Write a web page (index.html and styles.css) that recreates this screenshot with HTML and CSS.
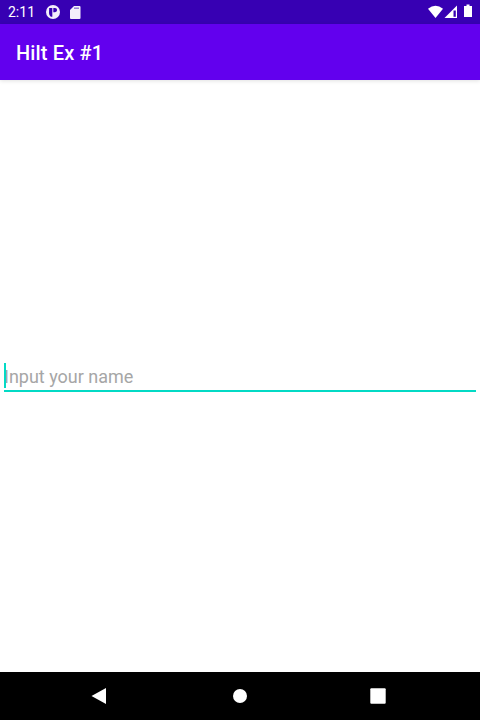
FILE: index.html
```html
<!DOCTYPE html>
<html lang="en">
<head>
<meta charset="utf-8">
<title>Hilt Ex #1</title>
<link rel="stylesheet" href="styles.css">
</head>
<body>
<div class="screen">
  <header class="status">
    <span class="clock">2:11</span>
    <svg class="icon app" width="14" height="14" viewBox="0 0 14 14"><circle cx="7" cy="7" r="7" fill="#f3effb"/><path d="M3.200 3H6.300V11.800H4.800Q3 10.300 3 8z" fill="#3700b3"/><path d="M7.300 3H9a2.100 2.100 0 0 1 0 4.200H7.300z" fill="#3700b3"/></svg>
    <svg class="icon sd" width="11" height="13" viewBox="0 0 11 13"><path d="M4 0H9.500Q10.500 0 10.500 1V12Q10.500 13 9.500 13H1Q0 13 0 12V4z" fill="#f3effb"/><path d="M4 2.200h5" stroke="#8f70d4" stroke-width="1.400"/></svg>
    <span class="spacer"></span>
    <svg class="icon" width="45" height="16" viewBox="0 0 45 16"><path d="M0 4.800Q7.500-1.200 15 4.800L7.500 14z" fill="#fff"/><path d="M29 1.500V14H16.500z" fill="#fff"/><path d="M25.500 6.500h2.300V12.800h-2.300z" fill="#3700b3"/><path d="M36 2h2.500V.5h3V2H44v11h-8z" fill="#fff"/></svg>
  </header>
  <div class="toolbar"><h1>Hilt Ex #1</h1></div>
  <main class="content">
    <div class="field"><span class="caret"></span><span class="hint">Input your name</span></div>
  </main>
  <nav class="nav">
    <svg width="480" height="48" viewBox="0 0 480 48" fill="#fff"><path d="M91.500 24L106 16V32z"/><circle cx="240" cy="24" r="7"/><rect x="370.300" y="16.300" width="15.400" height="15.400" rx="1"/></svg>
  </nav>
</div>
</body>
</html>
```
FILE: styles.css
```css
body { margin: 0; font-family: Roboto, sans-serif; }
.screen { display: flex; flex-direction: column; width: 480px; height: 720px; background: #fff; }
.status { display: flex; align-items: center; height: 24px; box-sizing: border-box; padding: 0 7px 0 8px; background: #3700b3; color: #fff; }
.clock { width: 38px; font-size: 14px; line-height: 24px; }
.icon { display: block; }
.sd { margin-left: 10px; }
.spacer { flex: 1; }
.toolbar { display: flex; align-items: center; height: 54px; padding: 2px 0 0 16px; background: #6200ee; color: #fff; box-shadow: 0 1px 4px rgba(0, 0, 0, .12); }
h1 { margin: 0; font-size: 20px; font-weight: 500; line-height: 24px; letter-spacing: .15px; }
.content { display: flex; align-items: center; flex: 1; padding: 0 4px; }
.field { position: relative; flex: 1; height: 29px; border-bottom: 2px solid #03dac5; }
.hint { display: block; font-size: 18px; line-height: 32px; color: #a6a6a6; }
.caret { position: absolute; left: 0; top: 2px; width: 2px; height: 25px; background: #03dac5; }
.nav { height: 48px; background: #000; }
.nav svg { display: block; }
```
